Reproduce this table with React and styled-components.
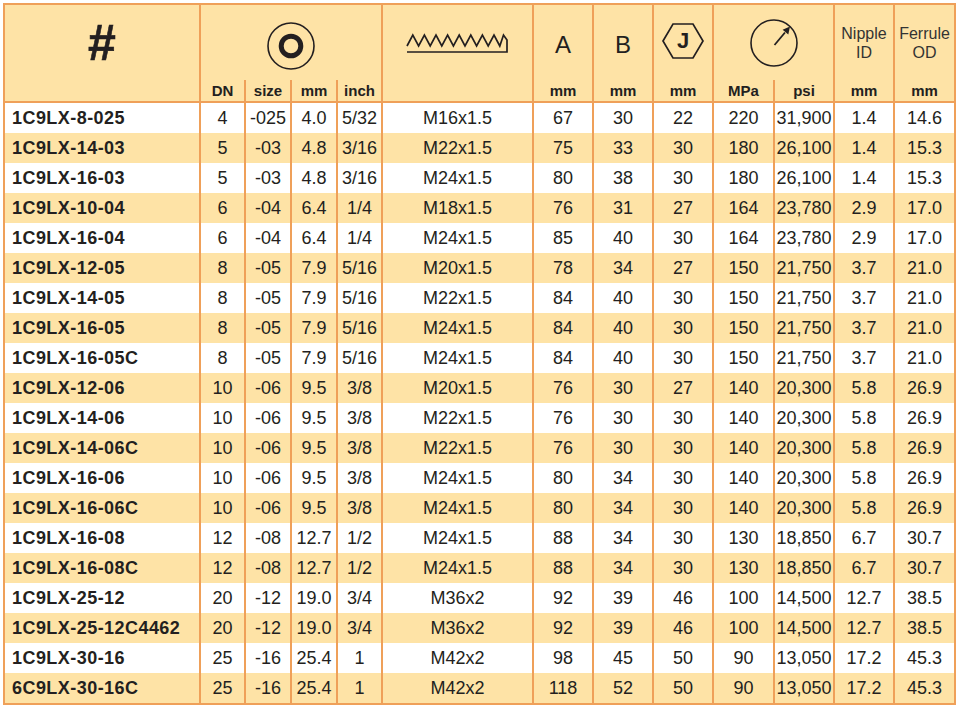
import styled, { createGlobalStyle } from 'styled-components';

const ORANGE = '#efa059';
const CREAM = '#fee3a6';
const INK = '#231f20';

const rows = [
  ['1C9LX-8-025', '4', '-025', '4.0', '5/32', 'M16x1.5', '67', '30', '22', '220', '31,900', '1.4', '14.6'],
  ['1C9LX-14-03', '5', '-03', '4.8', '3/16', 'M22x1.5', '75', '33', '30', '180', '26,100', '1.4', '15.3'],
  ['1C9LX-16-03', '5', '-03', '4.8', '3/16', 'M24x1.5', '80', '38', '30', '180', '26,100', '1.4', '15.3'],
  ['1C9LX-10-04', '6', '-04', '6.4', '1/4', 'M18x1.5', '76', '31', '27', '164', '23,780', '2.9', '17.0'],
  ['1C9LX-16-04', '6', '-04', '6.4', '1/4', 'M24x1.5', '85', '40', '30', '164', '23,780', '2.9', '17.0'],
  ['1C9LX-12-05', '8', '-05', '7.9', '5/16', 'M20x1.5', '78', '34', '27', '150', '21,750', '3.7', '21.0'],
  ['1C9LX-14-05', '8', '-05', '7.9', '5/16', 'M22x1.5', '84', '40', '30', '150', '21,750', '3.7', '21.0'],
  ['1C9LX-16-05', '8', '-05', '7.9', '5/16', 'M24x1.5', '84', '40', '30', '150', '21,750', '3.7', '21.0'],
  ['1C9LX-16-05C', '8', '-05', '7.9', '5/16', 'M24x1.5', '84', '40', '30', '150', '21,750', '3.7', '21.0'],
  ['1C9LX-12-06', '10', '-06', '9.5', '3/8', 'M20x1.5', '76', '30', '27', '140', '20,300', '5.8', '26.9'],
  ['1C9LX-14-06', '10', '-06', '9.5', '3/8', 'M22x1.5', '76', '30', '30', '140', '20,300', '5.8', '26.9'],
  ['1C9LX-14-06C', '10', '-06', '9.5', '3/8', 'M22x1.5', '76', '30', '30', '140', '20,300', '5.8', '26.9'],
  ['1C9LX-16-06', '10', '-06', '9.5', '3/8', 'M24x1.5', '80', '34', '30', '140', '20,300', '5.8', '26.9'],
  ['1C9LX-16-06C', '10', '-06', '9.5', '3/8', 'M24x1.5', '80', '34', '30', '140', '20,300', '5.8', '26.9'],
  ['1C9LX-16-08', '12', '-08', '12.7', '1/2', 'M24x1.5', '88', '34', '30', '130', '18,850', '6.7', '30.7'],
  ['1C9LX-16-08C', '12', '-08', '12.7', '1/2', 'M24x1.5', '88', '34', '30', '130', '18,850', '6.7', '30.7'],
  ['1C9LX-25-12', '20', '-12', '19.0', '3/4', 'M36x2', '92', '39', '46', '100', '14,500', '12.7', '38.5'],
  ['1C9LX-25-12C4462', '20', '-12', '19.0', '3/4', 'M36x2', '92', '39', '46', '100', '14,500', '12.7', '38.5'],
  ['1C9LX-30-16', '25', '-16', '25.4', '1', 'M42x2', '98', '45', '50', '90', '13,050', '17.2', '45.3'],
  ['6C9LX-30-16C', '25', '-16', '25.4', '1', 'M42x2', '118', '52', '50', '90', '13,050', '17.2', '45.3'],
];

const widths = [194, 45, 46, 46, 45, 151, 60, 60, 60, 61, 60, 60, 61];
const units = ['DN', 'size', 'mm', 'inch'];
const rightUnits = ['mm', 'mm', 'mm', 'MPa', 'psi', 'mm', 'mm'];

const GlobalStyle = createGlobalStyle`
  body {
    margin: 0;
    background: #ffffff;
    color: ${INK};
    font-family: "Liberation Sans", Arial, Helvetica, sans-serif;
  }
`;

const Page = styled.div`
  padding: 3px 0 0 3px;
`;

const Table = styled.table`
  width: 953px;
  table-layout: fixed;
  border-collapse: separate;
  border-spacing: 0;
  border: 2px solid ${ORANGE};
`;

const TopRow = styled.tr`
  height: 75px;
`;

const UnitRow = styled.tr`
  height: 23px;
`;

const HeadCell = styled.th`
  background: ${CREAM};
  padding: ${(p) => p.$pad || '0'};
  text-align: center;
  vertical-align: ${(p) => (p.$top ? 'top' : 'middle')};
  border-left: ${(p) => (p.$first ? 'none' : `2px solid ${ORANGE}`)};
  border-bottom: ${(p) => (p.$bottom ? `2px solid ${ORANGE}` : 'none')};
  font-weight: 400;
  color: ${INK};
`;

const UnitCell = styled.th`
  background: ${CREAM};
  padding: 0 0 1px;
  text-align: center;
  vertical-align: bottom;
  border-left: 2px solid ${ORANGE};
  border-bottom: 2px solid ${ORANGE};
  font-size: 15px;
  font-weight: 700;
  line-height: 18px;
  color: ${INK};
`;

const Hash = styled.div`
  font-size: 50px;
  font-weight: 700;
  line-height: 1;
  -webkit-text-stroke: 0.6px ${INK};
`;

const Letter = styled.span`
  font-size: 24px;
  line-height: 1;
`;

const TwoLine = styled.div`
  font-size: 16px;
  line-height: 19px;
  color: #333;
`;

const Icon = styled.svg`
  display: block;
  margin: 0 auto;
`;

const HexBadge = styled.div`
  display: inline-grid;
  place-items: center;
  width: 44px;
  height: 40px;

  & > * {
    grid-area: 1 / 1;
  }
`;

const HexLetter = styled.span`
  font-size: 22px;
  font-weight: 700;
  line-height: 1;
  padding-top: 1px;
`;

const DataRow = styled.tr`
  height: 30px;
  background: #ffffff;

  &:nth-child(even) {
    background: ${CREAM};
  }
`;

const Cell = styled.td`
  padding: ${(p) => (p.$part ? '0 0 0 7px' : '0')};
  border-left: ${(p) => (p.$part ? 'none' : `2px solid ${ORANGE}`)};
  text-align: ${(p) => (p.$part ? 'left' : 'center')};
  font-size: 18px;
  font-weight: ${(p) => (p.$part ? 700 : 400)};
  letter-spacing: ${(p) => (p.$part ? '0.45px' : '0')};
  white-space: nowrap;
  color: ${INK};
`;

function RingIcon() {
  return (
    <Icon width="50" height="50" viewBox="0 0 50 50">
      <circle cx="25" cy="25" r="23" fill="none" stroke={INK} strokeWidth="1.6" />
      <circle cx="25" cy="25" r="9.8" fill="none" stroke={INK} strokeWidth="5" />
    </Icon>
  );
}

function ThreadIcon() {
  const pts = [];
  const w = 11.6;
  for (let i = 0; i < 8; i++) {
    const x = 2 + i * w;
    pts.push(`${x + w / 2},5`, `${x + w},16`);
  }
  return (
    <Icon width="106" height="25" viewBox="0 0 106 25">
      <path
        d={`M2 16 L${pts.join(' L')} L98.5 5 L102 10 L102 22 L2 22`}
        fill="none"
        stroke={INK}
        strokeWidth="1.7"
        strokeLinejoin="miter"
      />
    </Icon>
  );
}

function HexIcon() {
  return (
    <HexBadge>
      <svg width="44" height="40" viewBox="0 0 44 40">
        <polygon points="2,20 12,3 32,3 42,20 32,37 12,37" fill="none" stroke={INK} strokeWidth="1.7" />
      </svg>
      <HexLetter>J</HexLetter>
    </HexBadge>
  );
}

function GaugeIcon() {
  return (
    <Icon width="50" height="50" viewBox="0 0 50 50">
      <circle cx="25" cy="25" r="23" fill="none" stroke={INK} strokeWidth="1.6" />
      <line x1="25.5" y1="27" x2="36" y2="14.5" stroke={INK} strokeWidth="1.8" />
      <polygon points="41,8.5 39.3,16.6 33.6,11.8" fill={INK} />
    </Icon>
  );
}

export default function App() {
  return (
    <Page>
      <GlobalStyle />
      <Table>
        <colgroup>
          {widths.map((w, i) => (
            <col key={i} style={{ width: w }} />
          ))}
        </colgroup>
        <thead>
          <TopRow>
            <HeadCell rowSpan={2} $first $top $bottom $pad="13px 0 0">
              <Hash>#</Hash>
            </HeadCell>
            <HeadCell colSpan={4} $pad="6px 0 0">
              <RingIcon />
            </HeadCell>
            <HeadCell rowSpan={2} $top $bottom $pad="25px 0 0">
              <ThreadIcon />
            </HeadCell>
            <HeadCell $pad="5px 0 0">
              <Letter>A</Letter>
            </HeadCell>
            <HeadCell $pad="5px 0 0">
              <Letter>B</Letter>
            </HeadCell>
            <HeadCell>
              <HexIcon />
            </HeadCell>
            <HeadCell colSpan={2}>
              <GaugeIcon />
            </HeadCell>
            <HeadCell $pad="1px 0 0">
              <TwoLine>
                Nipple
                <br />
                ID
              </TwoLine>
            </HeadCell>
            <HeadCell $pad="1px 0 0">
              <TwoLine>
                Ferrule
                <br />
                OD
              </TwoLine>
            </HeadCell>
          </TopRow>
          <UnitRow>
            {units.map((u) => (
              <UnitCell key={u}>{u}</UnitCell>
            ))}
            {rightUnits.map((u, i) => (
              <UnitCell key={i}>{u}</UnitCell>
            ))}
          </UnitRow>
        </thead>
        <tbody>
          {rows.map((r) => (
            <DataRow key={r[0]}>
              {r.map((v, i) => (
                <Cell key={i} $part={i === 0}>
                  {v}
                </Cell>
              ))}
            </DataRow>
          ))}
        </tbody>
      </Table>
    </Page>
  );
}
